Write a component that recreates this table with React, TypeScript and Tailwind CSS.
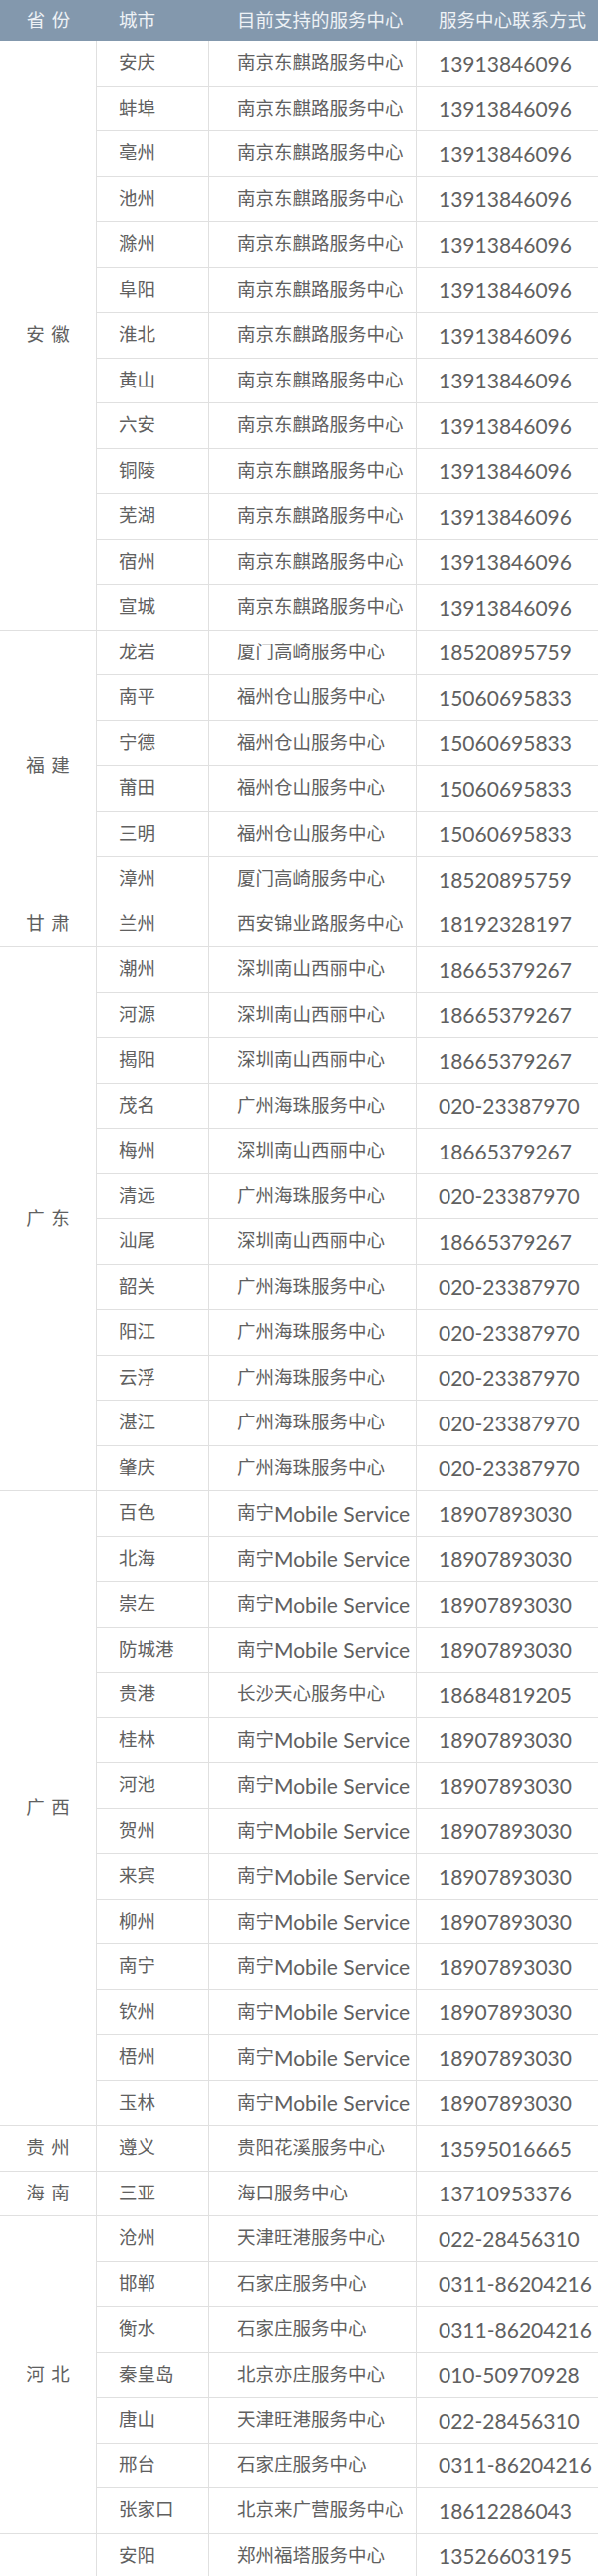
import React from "react";

type Row = [string, string, string];
type Group = { p: string; rows: Row[]; extra?: boolean };

const NJ = "南京东麒路服务中心";
const NJP = "13913846096";
const NN = "南宁Mobile Service";
const NNP = "18907893030";
const SZ = "深圳南山西丽中心";
const SZP = "18665379267";
const GZ = "广州海珠服务中心";
const GZP = "020-23387970";
const FZ = "福州仓山服务中心";
const FZP = "15060695833";
const XM = "厦门高崎服务中心";
const XMP = "18520895759";
const SJZ = "石家庄服务中心";
const SJZP = "0311-86204216";
const TJ = "天津旺港服务中心";
const TJP = "022-28456310";

const groups: Group[] = [
  {
    p: "安徽",
    rows: [
      ["安庆", NJ, NJP],
      ["蚌埠", NJ, NJP],
      ["亳州", NJ, NJP],
      ["池州", NJ, NJP],
      ["滁州", NJ, NJP],
      ["阜阳", NJ, NJP],
      ["淮北", NJ, NJP],
      ["黄山", NJ, NJP],
      ["六安", NJ, NJP],
      ["铜陵", NJ, NJP],
      ["芜湖", NJ, NJP],
      ["宿州", NJ, NJP],
      ["宣城", NJ, NJP],
    ],
  },
  {
    p: "福建",
    rows: [
      ["龙岩", XM, XMP],
      ["南平", FZ, FZP],
      ["宁德", FZ, FZP],
      ["莆田", FZ, FZP],
      ["三明", FZ, FZP],
      ["漳州", XM, XMP],
    ],
  },
  { p: "甘肃", rows: [["兰州", "西安锦业路服务中心", "18192328197"]] },
  {
    p: "广东",
    rows: [
      ["潮州", SZ, SZP],
      ["河源", SZ, SZP],
      ["揭阳", SZ, SZP],
      ["茂名", GZ, GZP],
      ["梅州", SZ, SZP],
      ["清远", GZ, GZP],
      ["汕尾", SZ, SZP],
      ["韶关", GZ, GZP],
      ["阳江", GZ, GZP],
      ["云浮", GZ, GZP],
      ["湛江", GZ, GZP],
      ["肇庆", GZ, GZP],
    ],
  },
  {
    p: "广西",
    rows: [
      ["百色", NN, NNP],
      ["北海", NN, NNP],
      ["崇左", NN, NNP],
      ["防城港", NN, NNP],
      ["贵港", "长沙天心服务中心", "18684819205"],
      ["桂林", NN, NNP],
      ["河池", NN, NNP],
      ["贺州", NN, NNP],
      ["来宾", NN, NNP],
      ["柳州", NN, NNP],
      ["南宁", NN, NNP],
      ["钦州", NN, NNP],
      ["梧州", NN, NNP],
      ["玉林", NN, NNP],
    ],
  },
  { p: "贵州", rows: [["遵义", "贵阳花溪服务中心", "13595016665"]] },
  { p: "海南", rows: [["三亚", "海口服务中心", "13710953376"]] },
  {
    p: "河北",
    rows: [
      ["沧州", TJ, TJP],
      ["邯郸", SJZ, SJZP],
      ["衡水", SJZ, SJZP],
      ["秦皇岛", "北京亦庄服务中心", "010-50970928"],
      ["唐山", TJ, TJP],
      ["邢台", SJZ, SJZP],
      ["张家口", "北京来广营服务中心", "18612286043"],
    ],
  },
  { p: "", rows: [["安阳", "郑州福塔服务中心", "13526603195"]], extra: true },
];

const font = { fontFamily: "Lato, 'Noto Sans CJK SC', sans-serif" };

function Mixed({ text }: { text: string }) {
  const parts = text.split(/([A-Za-z0-9\- ]+)/).filter((s) => s.length > 0);
  return (
    <>
      {parts.map((s, i) =>
        /[A-Za-z0-9]/.test(s) ? (
          <span key={i} className="text-[21px]">
            {s}
          </span>
        ) : (
          <span key={i}>{s}</span>
        )
      )}
    </>
  );
}

export default function App() {
  return (
    <div className="w-[600px] h-[2586px] overflow-hidden bg-white text-[18.5px] text-[#606060]" style={font}>
      <div className="flex h-[41px] items-center bg-[#8398ad] text-[#eef2f6]">
        <div className="w-[97px] text-center tracking-[0.35em] pl-[0.35em]">省份</div>
        <div className="w-[113px] pl-[22px]">城市</div>
        <div className="w-[208px] pl-[28px]">目前支持的服务中心</div>
        <div className="flex-1 pl-[22px]">服务中心联系方式</div>
      </div>
      {groups.map((g, gi) => (
        <div key={gi} className="flex">
          <div
            className={
              g.extra
                ? "w-[97px] shrink-0 h-[400px] border-r border-[#e0e0e0]"
                : "w-[97px] shrink-0 flex items-center justify-center border-r border-b border-[#e0e0e0]"
            }
          >
            <span className="tracking-[0.35em] pl-[0.35em]">{g.p}</span>
          </div>
          <div className="flex-1 flex flex-col">
            {g.rows.map((r) => (
              <div key={r[0]} className="flex h-[45.5px] shrink-0 items-center border-b border-[#e0e0e0]">
                <div className="w-[113px] h-full flex items-center pl-[22px] border-r border-[#e0e0e0]">{r[0]}</div>
                <div className="w-[208px] h-full flex items-center pl-[28px] border-r border-[#e0e0e0] whitespace-nowrap">
                  <Mixed text={r[1]} />
                </div>
                <div className="flex-1 h-full flex items-center pl-[22px] text-[21px]">{r[2]}</div>
              </div>
            ))}
          </div>
        </div>
      ))}
    </div>
  );
}
